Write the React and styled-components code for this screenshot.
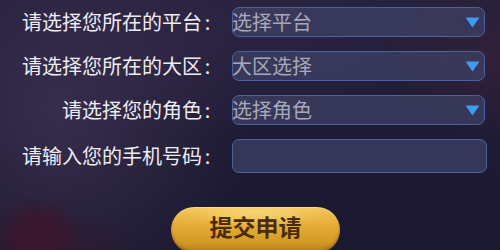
import { Fragment } from 'react';
import styled, { createGlobalStyle } from 'styled-components';

const Global = createGlobalStyle`
    html, body {
        margin: 0;
        padding: 0;
        width: 500px;
        height: 250px;
        overflow: hidden;
        background: #1d1a33;
    }
    * {
        box-sizing: border-box;
    }
`;

const Page = styled.div`
    width: 500px;
    height: 250px;
    overflow: hidden;
    font-family: 'Noto Sans CJK SC', 'Noto Sans', sans-serif;
    background:
        radial-gradient(ellipse 50px 46px at 38px 240px, rgba(58, 22, 44, 0.95) 40%, rgba(58, 22, 44, 0) 100%),
        radial-gradient(ellipse 40px 40px at 95px 250px, rgba(52, 24, 46, 0.5), rgba(52, 24, 46, 0) 100%),
        radial-gradient(ellipse 190px 200px at 60px 110px, rgba(64, 52, 84, 0.75), rgba(64, 52, 84, 0) 100%),
        radial-gradient(ellipse 120px 90px at 500px 60px, rgba(66, 36, 60, 0.5), rgba(66, 36, 60, 0) 100%),
        radial-gradient(ellipse 220px 120px at 260px 20px, rgba(50, 40, 72, 0.6), rgba(50, 40, 72, 0) 100%),
        linear-gradient(180deg, #241f3a 0%, #1d1a33 60%, #1b1930 100%);
    display: flex;
    flex-direction: column;
    align-items: flex-start;
    padding-top: 7px;
`;

const Form = styled.div`
    display: grid;
    grid-template-columns: 213px 255px;
    column-gap: 19px;
    row-gap: 14px;
    align-items: center;
`;

const Label = styled.div`
    display: flex;
    justify-content: flex-end;
    color: #efedf4;
    font-size: 20px;
    line-height: 30px;
    white-space: nowrap;
`;

const Colon = styled.span`
    width: 11px;
    text-align: center;
`;

const Select = styled.div`
    width: 253px;
    height: 30px;
    border: 1.5px solid #4c62a0;
    border-radius: 7px;
    background: rgba(62, 64, 100, 0.75);
    display: flex;
    align-items: center;
    justify-content: space-between;
    padding: 0 4px 0 0;
    color: #a8a8ba;
    font-size: 20px;
    line-height: 1;
`;

const Placeholder = styled.span`
    margin-left: -1px;
`;

const Arrow = styled.svg`
    width: 15px;
    height: 11px;
    display: block;
`;

const Input = styled.input`
    width: 255px;
    height: 34px;
    border: 1.5px solid #4c62a0;
    border-radius: 7px;
    background: rgba(60, 62, 98, 0.8);
    outline: none;
    padding: 0 6px;
    color: #e0e0ea;
    font-family: inherit;
    font-size: 18px;
`;

const ButtonRow = styled.div`
    padding-left: 171px;
    margin-top: 34px;
`;

const Submit = styled.button`
    width: 169px;
    height: 46px;
    border: none;
    border-radius: 23px;
    background:
        radial-gradient(ellipse 70px 14px at 50% 6px, rgba(255, 230, 150, 0.55), rgba(255, 230, 150, 0) 100%),
        linear-gradient(180deg, #f3c75a 0%, #e6ad36 40%, #d49a26 75%, #b97d16 100%);
    box-shadow: inset 0 -2px 3px rgba(120, 70, 10, 0.5), inset 0 1px 1px rgba(255, 240, 190, 0.6);
    color: #4a2c0a;
    font-family: 'Noto Sans CJK SC', sans-serif;
    font-weight: 700;
    font-size: 23px;
    padding: 0 0 8px;
    cursor: pointer;
`;

const fields = [
    { label: '请选择您所在的平台', value: '选择平台' },
    { label: '请选择您所在的大区', value: '大区选择' },
    { label: '请选择您的角色', value: '选择角色' },
];

function App() {
    return (
        <>
            <Global />
            <Page>
                <Form>
                    {fields.map((f) => (
                        <Fragment key={f.label}>
                            <Label>
                                {f.label}
                                <Colon>:</Colon>
                            </Label>
                            <Select>
                                <Placeholder>{f.value}</Placeholder>
                                <Arrow viewBox="0 0 15 11">
                                    <path d="M0.5 0.5 L14.5 0.5 L7.5 10.5 Z" fill="#3c9cf2" />
                                </Arrow>
                            </Select>
                        </Fragment>
                    ))}
                    <Label>
                        请输入您的手机号码
                        <Colon>:</Colon>
                    </Label>
                    <Input type="text" />
                </Form>
                <ButtonRow>
                    <Submit>提交申请</Submit>
                </ButtonRow>
            </Page>
        </>
    );
}
export default App;
